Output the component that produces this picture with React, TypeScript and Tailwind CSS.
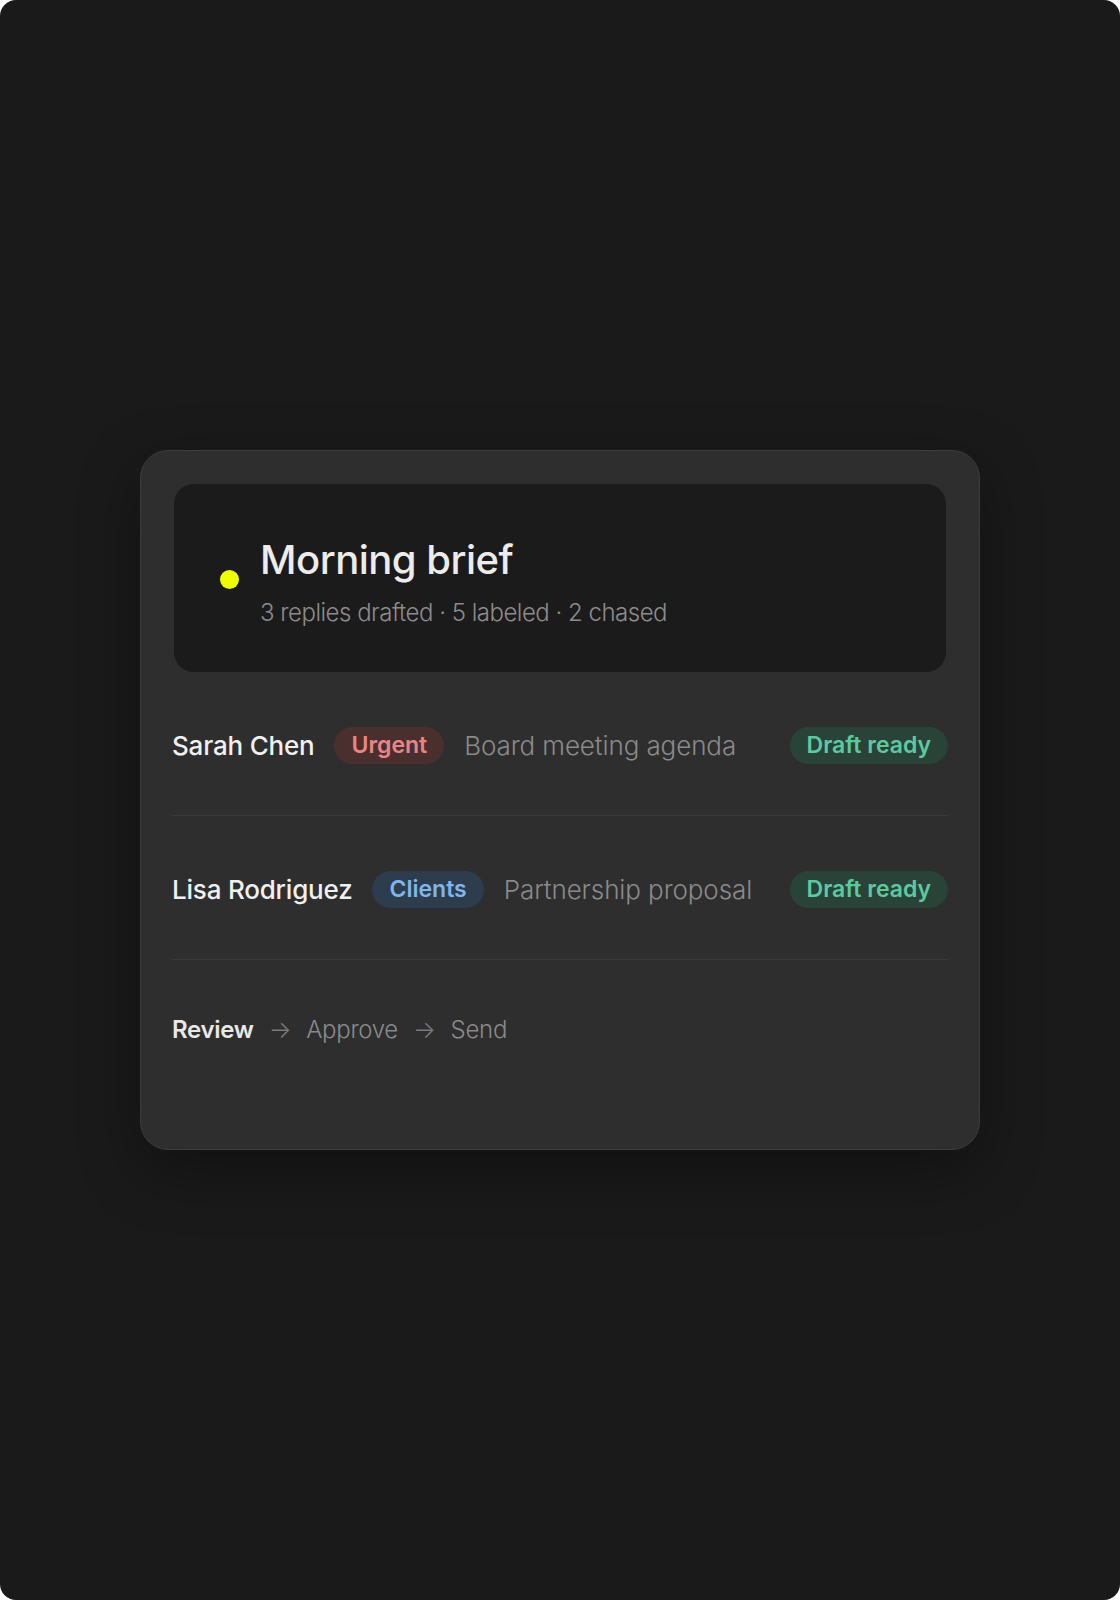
import React from "react";

const font = { fontFamily: "Inter, 'Noto Sans', sans-serif" };

function Row({ name, tag, tagClass, subject }: { name: string; tag: string; tagClass: string; subject: string }) {
  return (
    <div className="flex items-center border-b border-[#3b3b3b] pt-[55px] pb-[51px]">
      <span className="text-[26px] font-medium leading-[37px] tracking-[-0.2px] text-[#f0f0f0]">{name}</span>
      <span className={`ml-5 rounded-full px-[17px] text-[23px] font-semibold leading-[37px] tracking-[0px] ${tagClass}`}>{tag}</span>
      <span className="ml-5 text-[26px] font-light leading-[37px] tracking-[-0.1px] text-[#8a8a8a]">{subject}</span>
      <span className="ml-auto rounded-full bg-[#2a4339] px-[17px] text-[23px] font-semibold leading-[37px] tracking-[0px] text-[#5ccaa0]">
        Draft ready
      </span>
    </div>
  );
}

export default function App() {
  return (
    <div style={font} className="flex h-[1600px] w-[1120px] items-center justify-center rounded-[16px] bg-[#1a1a1a]">
      <div className="w-[840px] rounded-[28px] border border-[#3c3c3c] bg-[#2e2e2e] px-[31px] pt-[33px] pb-[33px] shadow-[0_20px_60px_rgba(0,0,0,0.35)]">
        <div className="mx-[2px] flex h-[188px] items-center rounded-[20px] bg-[#1b1b1b] pl-[46px]">
          <div className="mt-[2px] h-[19px] w-[19px] shrink-0 rounded-full bg-[#eeff00]" />
          <div className="ml-[21px] mt-[8px] flex flex-col">
            <span className="text-[40px] font-medium leading-[48px] tracking-[-0.5px] text-[#ececec]">Morning brief</span>
            <span className="mt-[13px] text-[24px] font-light leading-[32px] tracking-[-0.5px] text-[#8c8c8c]">
              3 replies drafted · 5 labeled · 2 chased
            </span>
          </div>
        </div>
        <Row name="Sarah Chen" tag="Urgent" tagClass="bg-[#4a2f2f] text-[#eb8585]" subject="Board meeting agenda" />
        <Row name="Lisa Rodriguez" tag="Clients" tagClass="bg-[#2e3d4e] text-[#80b5ec]" subject="Partnership proposal" />
        <div className="flex items-center gap-[15px] pt-[54px] pb-[70px] text-[24px] leading-[32px] tracking-[-0.3px]">
          <span className="font-semibold text-[#e8e8e8]">Review</span>
          <span className="text-[24px] font-light text-[#7a7a7a]">→</span>
          <span className="font-light text-[#8a8a8a]">Approve</span>
          <span className="text-[24px] font-light text-[#7a7a7a]">→</span>
          <span className="font-light text-[#8a8a8a]">Send</span>
        </div>
      </div>
    </div>
  );
}
